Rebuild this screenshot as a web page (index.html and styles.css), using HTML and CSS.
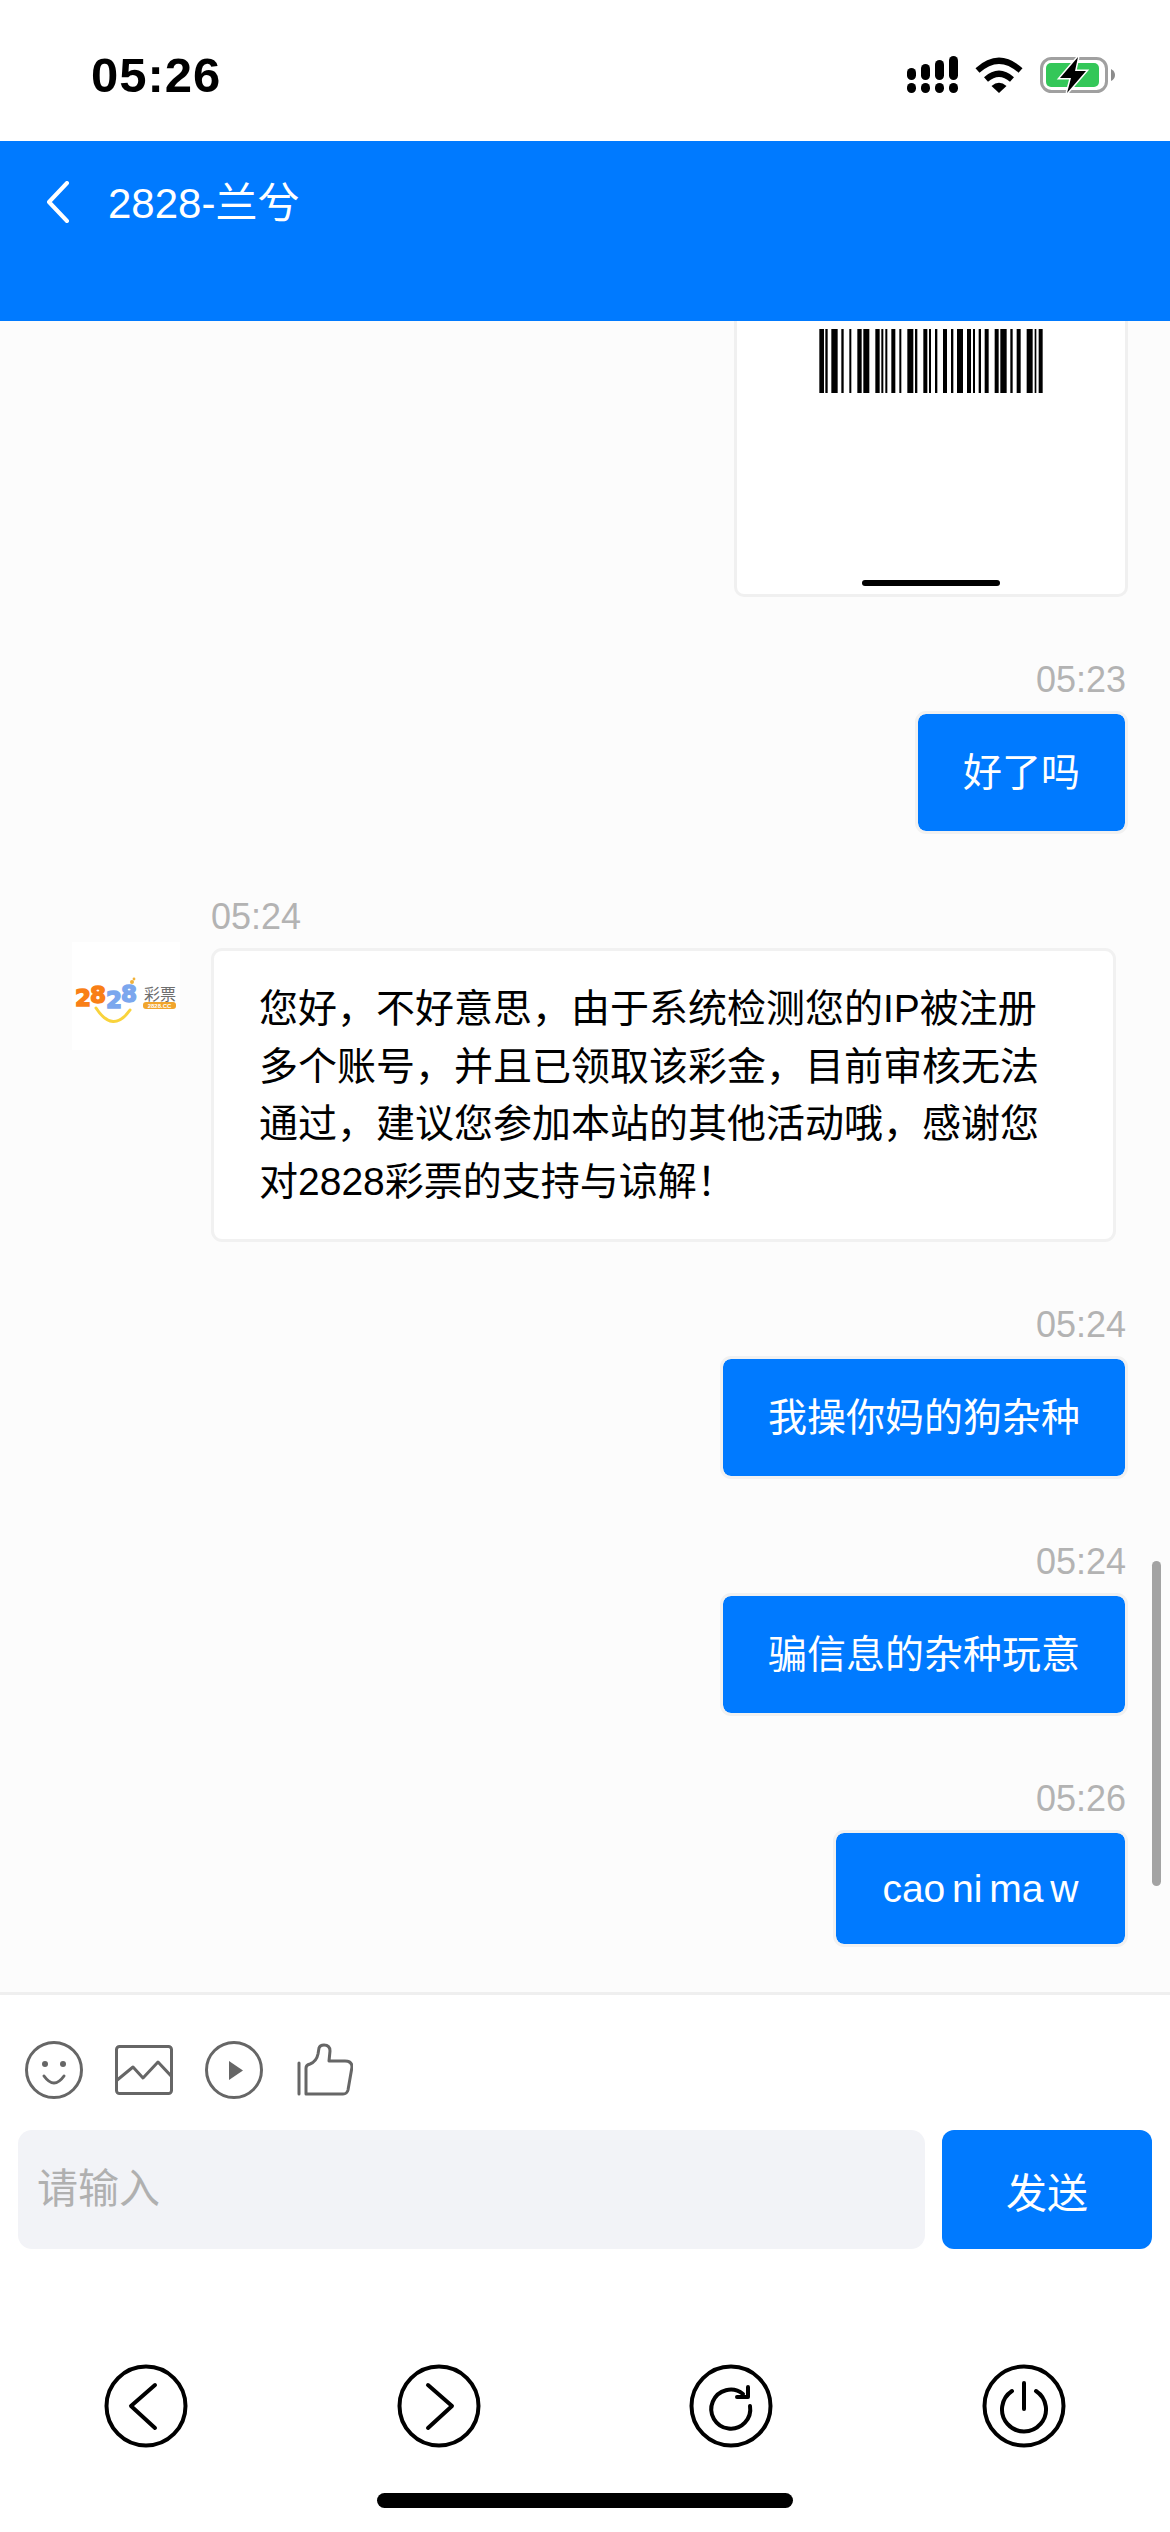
FILE: index.html
```html
<!DOCTYPE html>
<html lang="zh-CN">
<head>
  <meta charset="UTF-8">
  <title>2828-兰兮</title>
  <link rel="stylesheet" href="styles.css">
</head>
<body>
  <!-- status bar -->
  <div class="status-bar">
    <span class="status-time">05:26</span>
    <div class="status-icons">
      <svg class="icon-signal" viewBox="0 0 51 37">
        <rect x="0" y="12" width="9" height="12" rx="4.5"/>
        <rect x="14" y="8" width="9" height="16" rx="4.5"/>
        <rect x="28" y="4" width="9" height="20" rx="4.5"/>
        <rect x="42" y="0" width="9" height="24" rx="4.5"/>
        <rect x="0" y="27" width="9" height="10" rx="4.5"/>
        <rect x="14" y="27" width="9" height="10" rx="4.5"/>
        <rect x="28" y="27" width="9" height="10" rx="4.5"/>
        <rect x="42" y="27" width="9" height="10" rx="4.5"/>
      </svg>
      <svg class="icon-wifi" viewBox="0 0 48 36">
        <path class="wifi-arc" d="M2.5 13.5 Q24 -6 45.5 13.5"/>
        <path class="wifi-arc" d="M11 22.5 Q24 11 37 22.5"/>
        <path d="M16.5 29 Q24 22.5 31.5 29 L24 36 Z"/>
      </svg>
      <svg class="icon-battery" viewBox="0 0 75 36">
        <rect class="battery-shell" x="1.5" y="1.5" width="65" height="33" rx="10"/>
        <path class="battery-cap" d="M71 12 Q75 14 75 18 Q75 22 71 24 Z"/>
        <rect class="battery-level" x="6" y="6" width="53" height="24" rx="5"/>
        <path class="battery-bolt" d="M38 0 L20 21 H31 L27 36 L46 14 H35 Z"/>
      </svg>
    </div>
  </div>

  <!-- title bar -->
  <header class="top-bar">
    <svg class="back-icon" viewBox="0 0 24 42"><path d="M21 2 L3 21 L21 40"/></svg>
    <span class="top-title">2828-兰兮</span>
  </header>

  <!-- chat list -->
  <main class="chat">
    <div class="ticket">
      <svg class="barcode" viewBox="0 0 670 192">
        <path d="M0 0h14v192h-14zM18 0h7v192h-7zM36 0h19v192h-19zM66 0h7v192h-7zM90 0h6v192h-6zM114 0h13v192h-13zM132 0h18v192h-18zM168 0h13v192h-13zM186 0h6v192h-6zM198 0h6v192h-6zM216 0h12v192h-12zM240 0h6v192h-6zM264 0h18v192h-18zM287 0h7v192h-7zM312 0h12v192h-12zM329 0h6v192h-6zM347 0h7v192h-7zM371 0h12v192h-12zM395 0h7v192h-7zM413 0h18v192h-18zM443 0h12v192h-12zM461 0h6v192h-6zM478 0h7v192h-7zM496 0h12v192h-12zM526 0h12v192h-12zM543 0h19v192h-19zM573 0h7v192h-7zM592 0h12v192h-12zM622 0h18v192h-18zM646 0h5v192h-5zM658 0h12v192h-12z"/>
      </svg>
      <div class="ticket-bar"></div>
    </div>

    <div class="msg msg-me">
      <div class="msg-time">05:23</div>
      <div class="bubble">好了吗</div>
    </div>

    <div class="msg msg-other">
      <svg class="avatar" viewBox="0 0 108 108">
        <path class="logo-smile" d="M24 66 Q41 92 58 68"/>
        <circle class="logo-dot" cx="60" cy="40" r="2"/>
        <circle class="logo-dot" cx="62" cy="37" r="1.4"/>
        <text class="logo-num logo-orange" x="3" y="64">2<tspan dy="-3">8</tspan></text>
        <text class="logo-num logo-blue" x="34" y="66">2<tspan dy="-6">8</tspan></text>
        <text class="logo-cn" x="72" y="58">彩票</text>
        <rect class="logo-tag" x="71" y="60" width="33" height="7" rx="3"/>
        <text class="logo-tag-text" x="87.5" y="66">2828.CC</text>
      </svg>
      <div class="msg-body">
        <div class="msg-time">05:24</div>
        <div class="bubble">您好，不好意思，由于系统检测您的IP被注册多个账号，并且已领取该彩金，目前审核无法通过，建议您参加本站的其他活动哦，感谢您对2828彩票的支持与谅解！</div>
      </div>
    </div>

    <div class="msg msg-me">
      <div class="msg-time">05:24</div>
      <div class="bubble">我操你妈的狗杂种</div>
    </div>

    <div class="msg msg-me">
      <div class="msg-time">05:24</div>
      <div class="bubble">骗信息的杂种玩意</div>
    </div>

    <div class="msg msg-me">
      <div class="msg-time">05:26</div>
      <div class="bubble bubble-latin">cao ni ma w</div>
    </div>

    <div class="scroll-thumb"></div>
  </main>

  <!-- input area -->
  <section class="composer">
    <div class="tool-row">
      <svg class="tool-icon" viewBox="0 0 58 58">
        <circle cx="29" cy="29" r="27.5"/>
        <circle class="tool-fill" cx="20" cy="23" r="3"/>
        <circle class="tool-fill" cx="38" cy="23" r="3"/>
        <path d="M19 35 Q29 49 39 35"/>
      </svg>
      <svg class="tool-icon" viewBox="0 0 58 58">
        <rect x="1.5" y="5.5" width="55" height="47" rx="3"/>
        <path d="M1 40 L18 26 L28 37 L43 21 L57 36"/>
      </svg>
      <svg class="tool-icon" viewBox="0 0 58 58">
        <circle cx="29" cy="29" r="27.5"/>
        <path class="tool-fill" d="M24 20 L38 29.5 L24 39 Z"/>
      </svg>
      <svg class="tool-icon" viewBox="0 0 58 58">
        <path d="M4 22 V53"/>
        <path d="M11 53 V27 Q11 24 15 23 C20 21 22 18 23 13 L24 7 Q25 4 29 4 Q35 4 35 10 L34 20 H50 Q57 20 57 26 L53 49 Q52 53 48 53 Z"/>
      </svg>
    </div>
    <div class="input-row">
      <input class="msg-input" type="text" placeholder="请输入">
      <button class="send-btn">发送</button>
    </div>
  </section>

  <!-- browser controls -->
  <nav class="browser-bar">
    <div class="browser-item">
      <svg class="browser-icon" viewBox="0 0 84 84">
        <circle cx="42" cy="42" r="39.5"/>
        <path d="M51 21 L27 42 L51 64"/>
      </svg>
    </div>
    <div class="browser-item">
      <svg class="browser-icon" viewBox="0 0 84 84">
        <circle cx="42" cy="42" r="39.5"/>
        <path d="M31 21 L55 42 L31 64"/>
      </svg>
    </div>
    <div class="browser-item">
      <svg class="browser-icon" viewBox="0 0 84 84">
        <circle cx="42" cy="42" r="39.5"/>
        <path d="M61 42 A19.5 19.5 0 1 1 54 30"/>
        <path d="M48 33 H59 V23"/>
      </svg>
    </div>
    <div class="browser-item">
      <svg class="browser-icon" viewBox="0 0 84 84">
        <circle cx="42" cy="42" r="39.5"/>
        <path d="M30 27 A22 22 0 1 0 54 27"/>
        <path d="M42 19 V45"/>
      </svg>
    </div>
  </nav>

  <div class="home-bar"></div>
</body>
</html>
```

FILE: styles.css
```css
* {
  box-sizing: border-box;
}

body {
  margin: 0;
  width: 1170px;
  height: 2532px;
  overflow: hidden;
  display: flex;
  flex-direction: column;
  background-color: #fff;
  color: #000;
  font-family: "Liberation Sans", "Noto Sans CJK SC", sans-serif;
}

/* status bar */
.status-bar {
  height: 141px;
  flex-shrink: 0;
  display: flex;
  align-items: center;
  justify-content: space-between;
  padding: 8px 55px 0 91px;
}

.status-time {
  font-size: 49px;
  font-weight: bold;
  letter-spacing: 1px;
}

.status-icons {
  display: flex;
  align-items: center;
  gap: 17px;
}

.icon-signal {
  width: 51px;
  height: 37px;
}

.icon-wifi {
  width: 48px;
  height: 36px;
}

.icon-battery {
  width: 75px;
  height: 36px;
  overflow: visible;
}

.wifi-arc {
  fill: none;
  stroke: #000;
  stroke-width: 6;
}

.battery-shell {
  fill: none;
  stroke: #a0a0a0;
  stroke-width: 3;
}

.battery-cap {
  fill: #8c8c8c;
}

.battery-level {
  fill: #34c759;
}

.battery-bolt {
  fill: #000;
  stroke: #fff;
  stroke-width: 3;
  paint-order: stroke;
}

/* title bar */
.top-bar {
  height: 180px;
  flex-shrink: 0;
  display: flex;
  align-items: flex-start;
  gap: 38px;
  padding: 40px 0 0 46px;
  background-color: #007aff;
  color: #fff;
}

.back-icon {
  width: 24px;
  height: 42px;
  fill: none;
  stroke: #fff;
  stroke-width: 4;
  stroke-linecap: round;
  stroke-linejoin: round;
}

.top-title {
  font-size: 42px;
  line-height: 46px;
}

/* chat */
.chat {
  position: relative;
  flex: 1;
  min-height: 0;
  overflow: hidden;
  padding-right: 42px;
  background-color: #fcfcfc;
}

.ticket {
  width: 394px;
  margin-left: auto;
  padding: 8px 0;
  display: flex;
  flex-direction: column;
  align-items: center;
  background-color: #fff;
  border: 3px solid #f0f0f0;
  border-top: none;
  border-radius: 0 0 10px 10px;
}

.barcode {
  width: 224px;
  height: 64px;
  fill: #000;
}

.ticket-bar {
  width: 138px;
  height: 6px;
  margin-top: 187px;
  background-color: #000;
  border-radius: 3px;
}

.msg {
  margin-top: 63px;
}

.msg-time {
  height: 40px;
  margin-bottom: 11px;
  font-size: 36px;
  line-height: 40px;
  color: #b3b3b3;
}

.bubble {
  border: 3px solid #f1f1f1;
  border-radius: 11px;
  font-size: 39px;
  line-height: 57.6px;
}

.msg-me {
  display: flex;
  flex-direction: column;
  align-items: flex-end;
}

.msg-me .msg-time {
  margin-right: 2px;
}

.msg-me .bubble {
  padding: 29.7px 45px;
  background-color: #007aff;
  background-clip: padding-box;
  color: #fff;
}

.msg-me .bubble-latin {
  padding: 27px 46.5px;
  line-height: 57px;
  word-spacing: -4px;
}

.msg-other {
  display: flex;
  align-items: flex-start;
  gap: 31px;
  padding-left: 72px;
}

.avatar {
  width: 108px;
  height: 108px;
  margin-top: 45px;
  flex-shrink: 0;
  background-color: #fff;
}

.msg-body {
  width: 905px;
}

.msg-other .bubble {
  padding: 29px 45px;
  background-color: #fff;
}

.scroll-thumb {
  position: absolute;
  top: 1240px;
  right: 9px;
  width: 9px;
  height: 325px;
  background-color: #a3a3a3;
  border-radius: 5px;
}

/* avatar logo */
.logo-num {
  font-family: "DejaVu Sans", sans-serif;
  font-size: 23px;
  font-weight: bold;
  letter-spacing: -1px;
  stroke-width: 1.5;
}

.logo-orange {
  fill: #f97f16;
  stroke: #f97f16;
}

.logo-blue {
  fill: #7ba7ee;
  stroke: #7ba7ee;
}

.logo-cn {
  font-size: 16px;
  fill: #6e6e6e;
}

.logo-tag {
  fill: #f1a52c;
}

.logo-tag-text {
  font-size: 6px;
  font-weight: bold;
  text-anchor: middle;
  fill: #fff;
}

.logo-smile {
  fill: none;
  stroke: #f9d33c;
  stroke-width: 3;
  stroke-linecap: round;
}

.logo-dot {
  fill: #f1b23a;
}

/* composer */
.composer {
  flex-shrink: 0;
  padding: 46px 18px 0;
  border-top: 3px solid #efefef;
}

.tool-row {
  display: flex;
  gap: 32px;
  padding-left: 7px;
  margin-bottom: 31px;
}

.tool-icon {
  width: 58px;
  height: 58px;
  fill: none;
  stroke: #666;
  stroke-width: 3;
  stroke-linejoin: round;
  stroke-linecap: round;
}

.tool-icon .tool-fill {
  fill: #666;
  stroke: none;
}

.input-row {
  display: flex;
  gap: 17px;
  height: 119px;
}

.msg-input {
  width: 907px;
  padding: 0 19px;
  border: none;
  border-radius: 14px;
  outline: none;
  background-color: #f2f3f7;
  font-family: inherit;
  font-size: 41px;
}

.msg-input::placeholder {
  color: #b0b0b0;
}

.send-btn {
  flex: 1;
  border: none;
  border-radius: 12px;
  background-color: #007aff;
  color: #fff;
  font-family: inherit;
  font-size: 41px;
}

/* browser controls */
.browser-bar {
  flex-shrink: 0;
  display: flex;
  margin-top: 115px;
}

.browser-item {
  flex: 1;
  display: flex;
  justify-content: center;
}

.browser-icon {
  display: block;
  width: 84px;
  height: 84px;
  fill: none;
  stroke: #000;
  stroke-width: 4;
  stroke-linecap: round;
  stroke-linejoin: round;
}

.home-bar {
  flex-shrink: 0;
  width: 416px;
  height: 15px;
  margin: 45px auto 24px;
  background-color: #000;
  border-radius: 8px;
}
```
